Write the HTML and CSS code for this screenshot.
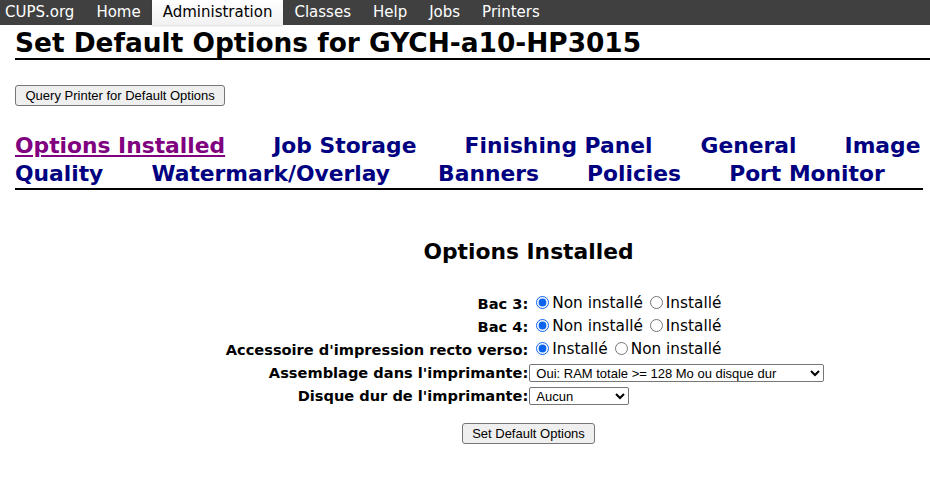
FILE: index.html
```html
<!DOCTYPE html>
<html lang="fr">
<head>
<meta charset="utf-8">
<title>Set Default Options for GYCH-a10-HP3015</title>
<link rel="stylesheet" href="styles.css">
</head>
<body>
<nav class="topnav">
  <a class="nav-item first" href="#">CUPS.org</a>
  <a class="nav-item" href="#">Home</a>
  <a class="nav-item active" href="#">Administration</a>
  <a class="nav-item" href="#">Classes</a>
  <a class="nav-item" href="#">Help</a>
  <a class="nav-item" href="#">Jobs</a>
  <a class="nav-item" href="#">Printers</a>
</nav>
<main class="page">
  <h1 class="title">Set Default Options for GYCH-a10-HP3015</h1>
  <div class="query-row"><button class="btn btn-query" type="button">Query Printer for Default Options</button></div>
  <div class="tabs"><a class="tab current" href="#">Options Installed</a> <a class="tab" href="#">Job Storage</a> <a class="tab" href="#">Finishing Panel</a> <a class="tab" href="#">General</a> <a class="tab" href="#">Image Quality</a> <a class="tab" href="#">Watermark/Overlay</a> <a class="tab" href="#">Banners</a> <a class="tab" href="#">Policies</a> <a class="tab" href="#">Port Monitor</a></div>
  <section class="panel">
    <h2 class="panel-title">Options Installed</h2>
    <table class="opts">
      <tr>
        <th>Bac 3:</th>
        <td><input type="radio" name="t3" checked>Non installé<input type="radio" name="t3">Installé</td>
      </tr>
      <tr>
        <th>Bac 4:</th>
        <td><input type="radio" name="t4" checked>Non installé<input type="radio" name="t4">Installé</td>
      </tr>
      <tr>
        <th>Accessoire d'impression recto verso:</th>
        <td><input type="radio" name="dup" checked>Installé<input type="radio" name="dup">Non installé</td>
      </tr>
      <tr>
        <th>Assemblage dans l'imprimante:</th>
        <td><select class="sel sel-wide"><option>Oui: RAM totale &gt;= 128 Mo ou disque dur</option></select></td>
      </tr>
      <tr>
        <th>Disque dur de l'imprimante:</th>
        <td><select class="sel sel-narrow"><option>Aucun</option></select></td>
      </tr>
    </table>
    <div class="submit-row"><button class="btn btn-submit" type="button">Set Default Options</button></div>
  </section>
</main>
</body>
</html>
```

FILE: styles.css
```css
html, body {
  margin: 0;
  padding: 0;
  background: #fff;
  overflow: hidden;
}
body {
  font-family: "DejaVu Sans", "Open Sans", sans-serif;
  color: #000;
}
.topnav {
  display: flex;
  align-items: stretch;
  height: 25px;
  background: #404040;
}
.nav-item {
  display: block;
  color: #fff;
  text-decoration: none;
  font-size: 15px;
  line-height: 24px;
  padding: 0 11px;
}
.nav-item.first {
  padding-left: 5px;
}
.nav-item.active {
  color: #000;
  background: linear-gradient(#ffffff, #f1f1f1);
  box-shadow: 0 1px 2px rgba(0,0,0,0.15);
}
.page {
  padding-left: 15px;
}
.title {
  font-size: 26.4px;
  font-weight: bold;
  margin: 0;
  padding-top: 3px;
  line-height: 30px;
  border-bottom: 2px solid #000;
}
.query-row {
  margin-top: 25px;
  line-height: 0;
}
.btn {
  font-family: "Liberation Sans", Arial, sans-serif;
  font-size: 13px;
  line-height: 15px;
  color: #000;
  background: #efefef;
  border: 1px solid #767676;
  border-radius: 3px;
  height: 21px;
}
.btn-query {
  padding: 1px 9.5px;
}
.btn-submit {
  padding: 1px 9px;
}
.tabs {
  width: 908px;
  margin-top: 26px;
  font-size: 21.8px;
  font-weight: bold;
  line-height: 28px;
  border-bottom: 2px solid #000;
}
.tab {
  color: #000080;
  text-decoration: none;
  margin-right: 40.5px;
}
.tab:last-child {
  margin-right: 0;
}
.tab.current {
  color: #800080;
  text-decoration: underline;
}
.panel {
  padding-left: 112px;
  text-align: center;
  margin-top: 49px;
}
.panel-title {
  font-size: 21.8px;
  font-weight: bold;
  margin: 0 0 28px 0;
  line-height: 25px;
}
.opts {
  margin: 0 auto;
  border-collapse: collapse;
  border-spacing: 0;
}
.opts th,
.opts td {
  padding: 0;
  line-height: 23px;
  height: 23px;
  white-space: nowrap;
  vertical-align: middle;
}
.opts th {
  font-size: 14.6px;
  text-align: right;
  font-weight: bold;
}
.opts td {
  font-size: 15.3px;
  text-align: left;
  padding: 0 7px 0 1px;
}
.opts input[type=radio] {
  margin: 0 3px 0 7px;
  width: 13px;
  height: 13px;
  vertical-align: -1px;
  accent-color: #0a64f0;
}
.sel {
  font-family: "Liberation Sans", Arial, sans-serif;
  font-size: 13px;
  height: 18px;
  margin: 0;
  padding: 0 0 0 2px;
  border: 1px solid #767676;
  border-radius: 2px;
  background: #fff;
  vertical-align: middle;
}
.sel-wide { width: 295px; }
.sel-narrow { width: 100px; }
.submit-row {
  margin-top: 16px;
  line-height: 0;
}
```
